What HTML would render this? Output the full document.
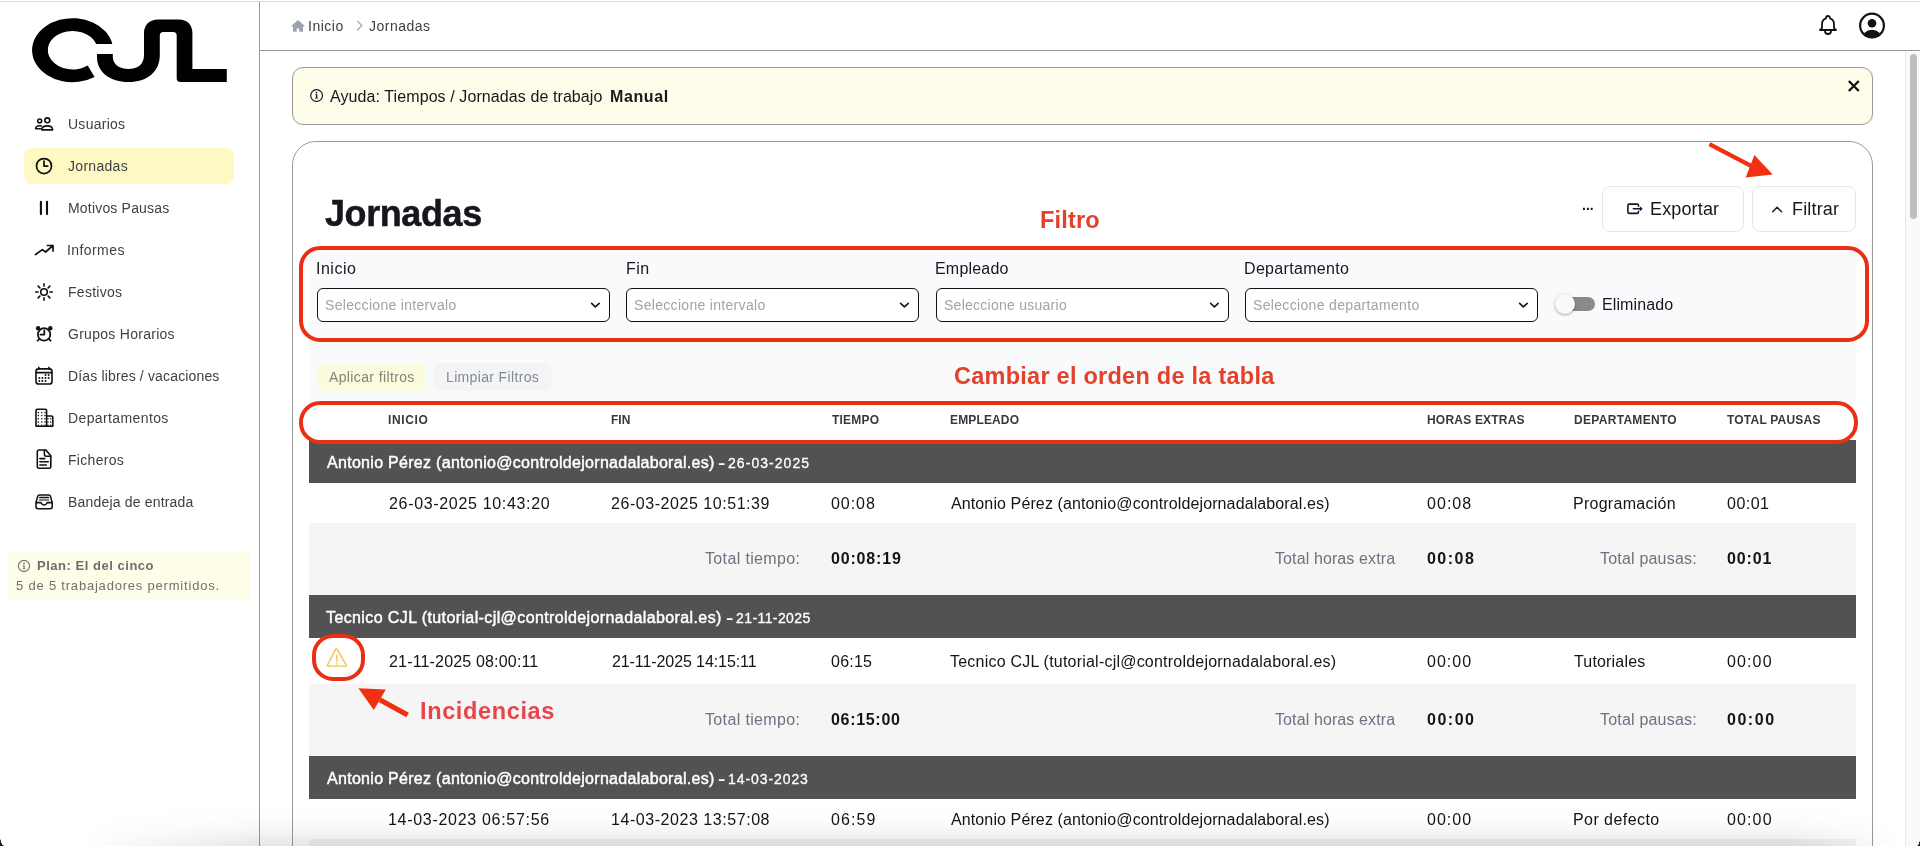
<!DOCTYPE html>
<html lang="es"><head><meta charset="utf-8"><title>Jornadas</title><style>
html,body{margin:0;padding:0}
body{width:1920px;height:846px;overflow:hidden;position:relative;background:#fff;font-family:"Liberation Sans",sans-serif;}
.a{position:absolute;box-sizing:border-box}
.t{position:absolute;white-space:nowrap;will-change:transform;}
svg{position:absolute;overflow:visible}
</style></head><body>
<div class="a" style="left:0px;top:1px;width:1920px;height:1px;background:#dddddd;"></div>
<div class="a" style="left:259px;top:2px;width:1px;height:844px;background:#9a9a9a;"></div>
<div class="a" style="left:260px;top:50px;width:1660px;height:1px;background:#9a9a9a;"></div>
<div class="a" style="left:1905px;top:51px;width:15px;height:795px;background:#fafafa;border-left:1px solid #e8e8e8;"></div>
<div class="a" style="left:1909.5px;top:54px;width:7.5px;height:165px;background:#bebebe;border-radius:4px;"></div>
<svg style="left:0;top:0" width="260" height="100" viewBox="0 0 260 100" role="img" aria-label="CJL"><title>CJL</title><g fill="#000">
<path d="M112.3 43.9 A40.5 32 0 1 0 94.6 77 L87.7 65.5 A24.9 19.2 0 1 1 96.2 43.9 Z"/>
<path d="M97 54 H112.8 V57 C112.8 64 119 69 128.4 69 C138 69 144 64 144 55 V33 C144 24.5 150 19.4 158 19.4 H179 C187 19.4 192.4 24.5 192.4 33 V69 H226.8 V82 H180.5 C178 82 176.7 80.5 176.7 78.5 V35.5 C176.7 33.2 175.5 32 173.2 32 H163.3 C161 32 159.8 33.2 159.8 35.5 V55 C159.8 72 147 82 128.5 82 C110 82 97 72 97 57 Z"/>
</g></svg>
<div class="a" style="left:24px;top:148px;width:210px;height:36px;background:#fef9c3;border-radius:8px;"></div>
<span class="t" style="left:67.62px;top:114.15px;font-size:14px;color:#3f3f46;line-height:20px;letter-spacing:0.263px;">Usuarios</span>
<span class="t" style="left:67.99px;top:156.15px;font-size:14px;color:#3f3f46;line-height:20px;letter-spacing:0.303px;">Jornadas</span>
<span class="t" style="left:67.55px;top:198.15px;font-size:14px;color:#3f3f46;line-height:20px;letter-spacing:0.187px;">Motivos Pausas</span>
<span class="t" style="left:67.41px;top:240.15px;font-size:14px;color:#3f3f46;line-height:20px;letter-spacing:0.419px;">Informes</span>
<span class="t" style="left:67.55px;top:282.15px;font-size:14px;color:#3f3f46;line-height:20px;letter-spacing:0.275px;">Festivos</span>
<span class="t" style="left:67.50px;top:324.15px;font-size:14px;color:#3f3f46;line-height:20px;letter-spacing:0.279px;">Grupos Horarios</span>
<span class="t" style="left:67.55px;top:366.15px;font-size:14px;color:#3f3f46;line-height:20px;letter-spacing:0.153px;">Días libres / vacaciones</span>
<span class="t" style="left:67.55px;top:408.15px;font-size:14px;color:#3f3f46;line-height:20px;letter-spacing:0.386px;">Departamentos</span>
<span class="t" style="left:67.55px;top:450.15px;font-size:14px;color:#3f3f46;line-height:20px;letter-spacing:0.296px;">Ficheros</span>
<span class="t" style="left:67.55px;top:492.15px;font-size:14px;color:#3f3f46;line-height:20px;letter-spacing:0.184px;">Bandeja de entrada</span>
<div class="a" style="left:8px;top:552px;width:242px;height:48px;background:#fefde7;"></div>
<span class="t" style="left:36.54px;top:556.39px;font-size:13px;color:#6c6d72;line-height:20px;letter-spacing:0.525px;font-weight:700;">Plan: El del cinco</span>
<span class="t" style="left:15.98px;top:576.29px;font-size:13px;color:#707176;line-height:20px;letter-spacing:0.796px;">5 de 5 trabajadores permitidos.</span>
<span class="t" style="left:307.71px;top:15.95px;font-size:14px;color:#3b3f46;line-height:20px;letter-spacing:0.496px;">Inicio</span>
<span class="t" style="left:369.49px;top:15.95px;font-size:14px;color:#3b3f46;line-height:20px;letter-spacing:0.489px;">Jornadas</span>
<div class="a" style="left:292px;top:67px;width:1581px;height:58px;background:#fefdea;border:1px solid #9a9a9a;border-radius:11px;"></div>
<span class="t" style="left:329.87px;top:86.85px;font-size:16px;color:#15171c;line-height:20px;letter-spacing:0.091px;">Ayuda: Tiempos / Jornadas de trabajo</span>
<span class="t" style="left:609.74px;top:86.85px;font-size:16px;color:#15171c;line-height:20px;letter-spacing:0.611px;font-weight:700;">Manual</span>
<div class="a" style="left:292px;top:141px;width:1581px;height:759px;background:#fff;border:1px solid #9a9a9a;border-radius:24px;"></div>
<span class="t" style="left:325.26px;top:203.52px;font-size:36px;color:#15171c;line-height:20px;letter-spacing:-0.412px;font-weight:700;-webkit-text-stroke:0.5px #15171c;">Jornadas</span>
<span class="t" style="left:1581.66px;top:195.05px;font-size:14px;color:#15171c;line-height:20px;font-weight:700;">...</span>
<div class="a" style="left:1602px;top:186px;width:142px;height:45.5px;background:#fff;border:1px solid #e5e7eb;border-radius:8px;"></div>
<div class="a" style="left:1752px;top:186px;width:104px;height:45.5px;background:#fff;border:1px solid #e5e7eb;border-radius:8px;"></div>
<span class="t" style="left:1649.92px;top:198.96px;font-size:18px;color:#15171c;line-height:20px;letter-spacing:0.148px;">Exportar</span>
<span class="t" style="left:1792.32px;top:198.96px;font-size:18px;color:#15171c;line-height:20px;letter-spacing:0.162px;">Filtrar</span>
<div class="a" style="left:309px;top:251px;width:1547px;height:152px;background:#f9fafb;"></div>
<span class="t" style="left:315.93px;top:259.05px;font-size:16px;color:#15171c;line-height:20px;letter-spacing:0.496px;">Inicio</span>
<span class="t" style="left:625.89px;top:259.05px;font-size:16px;color:#15171c;line-height:20px;letter-spacing:0.406px;">Fin</span>
<span class="t" style="left:934.99px;top:259.05px;font-size:16px;color:#15171c;line-height:20px;letter-spacing:0.189px;">Empleado</span>
<span class="t" style="left:1244.39px;top:259.05px;font-size:16px;color:#15171c;line-height:20px;letter-spacing:0.325px;">Departamento</span>
<div class="a" style="left:317px;top:288px;width:293px;height:34px;background:#fff;border:1px solid #111;border-radius:6px;"></div>
<span class="t" style="left:325.37px;top:295.05px;font-size:14px;color:#9ea3ab;line-height:20px;letter-spacing:0.311px;">Seleccione intervalo</span>
<div class="a" style="left:626px;top:288px;width:293px;height:34px;background:#fff;border:1px solid #111;border-radius:6px;"></div>
<span class="t" style="left:634.37px;top:295.05px;font-size:14px;color:#9ea3ab;line-height:20px;letter-spacing:0.311px;">Seleccione intervalo</span>
<div class="a" style="left:936px;top:288px;width:293px;height:34px;background:#fff;border:1px solid #111;border-radius:6px;"></div>
<span class="t" style="left:944.37px;top:295.05px;font-size:14px;color:#9ea3ab;line-height:20px;letter-spacing:0.259px;">Seleccione usuario</span>
<div class="a" style="left:1245px;top:288px;width:293px;height:34px;background:#fff;border:1px solid #111;border-radius:6px;"></div>
<span class="t" style="left:1253.37px;top:295.05px;font-size:14px;color:#9ea3ab;line-height:20px;letter-spacing:0.338px;">Seleccione departamento</span>
<span class="t" style="left:1601.89px;top:295.45px;font-size:16px;color:#15171c;line-height:20px;letter-spacing:0.102px;">Eliminado</span>
<div class="a" style="left:1564px;top:297px;width:31px;height:14px;background:#8a8a8a;border-radius:7px;"></div>
<div class="a" style="left:1555px;top:294px;width:20px;height:20px;background:#fafafa;border-radius:10px;box-shadow:0 1px 3px rgba(0,0,0,.35);"></div>
<div class="a" style="left:317px;top:363px;width:109px;height:28px;background:#fbfbdd;border-radius:6px;"></div>
<div class="a" style="left:434px;top:363px;width:118px;height:28px;background:#f3f4f6;border-radius:6px;"></div>
<span class="t" style="left:329.47px;top:366.65px;font-size:14px;color:#84857a;line-height:20px;letter-spacing:0.372px;">Aplicar filtros</span>
<span class="t" style="left:446.35px;top:366.65px;font-size:14px;color:#858990;line-height:20px;letter-spacing:0.353px;">Limpiar Filtros</span>
<div class="a" style="left:309px;top:403px;width:1547px;height:38px;background:#fff;"></div>
<span class="t" style="left:388.21px;top:410.04px;font-size:12px;color:#36383f;line-height:20px;letter-spacing:0.625px;font-weight:700;">INICIO</span>
<span class="t" style="left:610.91px;top:410.04px;font-size:12px;color:#36383f;line-height:20px;font-weight:700;">FIN</span>
<span class="t" style="left:832.07px;top:410.04px;font-size:12px;color:#36383f;line-height:20px;letter-spacing:0.226px;font-weight:700;">TIEMPO</span>
<span class="t" style="left:949.51px;top:410.04px;font-size:12px;color:#36383f;line-height:20px;letter-spacing:0.141px;font-weight:700;">EMPLEADO</span>
<span class="t" style="left:1426.91px;top:410.04px;font-size:12px;color:#36383f;line-height:20px;letter-spacing:0.201px;font-weight:700;">HORAS EXTRAS</span>
<span class="t" style="left:1573.71px;top:410.04px;font-size:12px;color:#36383f;line-height:20px;letter-spacing:0.305px;font-weight:700;">DEPARTAMENTO</span>
<span class="t" style="left:1726.87px;top:410.04px;font-size:12px;color:#36383f;line-height:20px;letter-spacing:0.207px;font-weight:700;">TOTAL PAUSAS</span>
<div class="a" style="left:309px;top:440px;width:1547px;height:43px;background:#525252;"></div>
<span class="t" style="left:326.57px;top:453.05px;font-size:16px;color:#fff;line-height:20px;letter-spacing:0.294px;-webkit-text-stroke:0.45px #fff;">Antonio Pérez (antonio@controldejornadalaboral.es)</span>
<span class="t" style="left:717.63px;top:452.87px;font-size:22px;color:#fff;line-height:20px;-webkit-text-stroke:0.2px #fff;">-</span>
<span class="t" style="left:728.30px;top:453.15px;font-size:14px;color:#fff;line-height:20px;letter-spacing:1.051px;-webkit-text-stroke:0.3px #fff;">26-03-2025</span>
<div class="a" style="left:309px;top:483px;width:1547px;height:40px;background:#fff;"></div>
<span class="t" style="left:388.90px;top:493.75px;font-size:16px;color:#141414;line-height:20px;letter-spacing:0.674px;">26-03-2025 10:43:20</span>
<span class="t" style="left:611.10px;top:493.75px;font-size:16px;color:#141414;line-height:20px;letter-spacing:0.549px;">26-03-2025 10:51:39</span>
<span class="t" style="left:831.28px;top:493.75px;font-size:16px;color:#141414;line-height:20px;letter-spacing:0.944px;">00:08</span>
<span class="t" style="left:950.57px;top:493.75px;font-size:16px;color:#141414;line-height:20px;letter-spacing:0.114px;">Antonio Pérez (antonio@controldejornadalaboral.es)</span>
<span class="t" style="left:1427.48px;top:493.75px;font-size:16px;color:#141414;line-height:20px;letter-spacing:1.044px;">00:08</span>
<span class="t" style="left:1573.39px;top:493.75px;font-size:16px;color:#141414;line-height:20px;letter-spacing:0.267px;">Programación</span>
<span class="t" style="left:1726.58px;top:493.75px;font-size:16px;color:#141414;line-height:20px;letter-spacing:0.489px;">00:01</span>
<div class="a" style="left:309px;top:523px;width:1547px;height:72px;background:#f5f5f5;"></div>
<span class="t" style="left:705.45px;top:548.95px;font-size:16px;color:#6b7280;line-height:20px;letter-spacing:0.358px;">Total tiempo:</span>
<span class="t" style="left:831.28px;top:548.95px;font-size:16px;color:#141414;line-height:20px;letter-spacing:0.822px;font-weight:700;">00:08:19</span>
<span class="t" style="left:1275.25px;top:548.95px;font-size:16px;color:#6b7280;line-height:20px;letter-spacing:0.110px;">Total horas extra</span>
<span class="t" style="left:1427.48px;top:548.95px;font-size:16px;color:#141414;line-height:20px;letter-spacing:1.471px;font-weight:700;">00:08</span>
<span class="t" style="left:1599.55px;top:548.95px;font-size:16px;color:#6b7280;line-height:20px;letter-spacing:0.194px;">Total pausas:</span>
<span class="t" style="left:1726.58px;top:548.95px;font-size:16px;color:#141414;line-height:20px;letter-spacing:0.859px;font-weight:700;">00:01</span>
<div class="a" style="left:309px;top:595px;width:1547px;height:43px;background:#525252;"></div>
<span class="t" style="left:326.25px;top:608.15px;font-size:16px;color:#fff;line-height:20px;letter-spacing:0.393px;-webkit-text-stroke:0.45px #fff;">Tecnico CJL (tutorial-cjl@controldejornadalaboral.es)</span>
<span class="t" style="left:725.63px;top:607.97px;font-size:22px;color:#fff;line-height:20px;-webkit-text-stroke:0.2px #fff;">-</span>
<span class="t" style="left:736.30px;top:608.25px;font-size:14px;color:#fff;line-height:20px;letter-spacing:0.411px;-webkit-text-stroke:0.3px #fff;">21-11-2025</span>
<div class="a" style="left:309px;top:638px;width:1547px;height:46px;background:#fff;"></div>
<span class="t" style="left:389.20px;top:651.85px;font-size:16px;color:#141414;line-height:20px;letter-spacing:0.171px;">21-11-2025 08:00:11</span>
<span class="t" style="left:611.50px;top:651.85px;font-size:16px;color:#141414;line-height:20px;letter-spacing:-0.090px;">21-11-2025 14:15:11</span>
<span class="t" style="left:831.38px;top:651.85px;font-size:16px;color:#141414;line-height:20px;letter-spacing:0.236px;">06:15</span>
<span class="t" style="left:950.35px;top:651.85px;font-size:16px;color:#141414;line-height:20px;letter-spacing:0.216px;">Tecnico CJL (tutorial-cjl@controldejornadalaboral.es)</span>
<span class="t" style="left:1427.48px;top:651.85px;font-size:16px;color:#141414;line-height:20px;letter-spacing:1.024px;">00:00</span>
<span class="t" style="left:1574.35px;top:651.85px;font-size:16px;color:#141414;line-height:20px;letter-spacing:0.175px;">Tutoriales</span>
<span class="t" style="left:1726.58px;top:651.85px;font-size:16px;color:#141414;line-height:20px;letter-spacing:1.124px;">00:00</span>
<div class="a" style="left:309px;top:684px;width:1547px;height:72px;background:#f5f5f5;"></div>
<span class="t" style="left:705.45px;top:710.45px;font-size:16px;color:#6b7280;line-height:20px;letter-spacing:0.358px;">Total tiempo:</span>
<span class="t" style="left:831.28px;top:710.45px;font-size:16px;color:#141414;line-height:20px;letter-spacing:0.689px;font-weight:700;">06:15:00</span>
<span class="t" style="left:1275.25px;top:710.45px;font-size:16px;color:#6b7280;line-height:20px;letter-spacing:0.110px;">Total horas extra</span>
<span class="t" style="left:1427.48px;top:710.45px;font-size:16px;color:#141414;line-height:20px;letter-spacing:1.511px;font-weight:700;">00:00</span>
<span class="t" style="left:1599.55px;top:710.45px;font-size:16px;color:#6b7280;line-height:20px;letter-spacing:0.194px;">Total pausas:</span>
<span class="t" style="left:1726.58px;top:710.45px;font-size:16px;color:#141414;line-height:20px;letter-spacing:1.536px;font-weight:700;">00:00</span>
<div class="a" style="left:309px;top:756px;width:1547px;height:43px;background:#525252;"></div>
<span class="t" style="left:326.57px;top:768.85px;font-size:16px;color:#fff;line-height:20px;letter-spacing:0.294px;-webkit-text-stroke:0.45px #fff;">Antonio Pérez (antonio@controldejornadalaboral.es)</span>
<span class="t" style="left:717.83px;top:768.67px;font-size:22px;color:#fff;line-height:20px;-webkit-text-stroke:0.2px #fff;">-</span>
<span class="t" style="left:728.14px;top:768.95px;font-size:14px;color:#fff;line-height:20px;letter-spacing:0.917px;-webkit-text-stroke:0.3px #fff;">14-03-2023</span>
<div class="a" style="left:309px;top:799px;width:1547px;height:40px;background:#fff;"></div>
<span class="t" style="left:388.48px;top:810.05px;font-size:16px;color:#141414;line-height:20px;letter-spacing:0.702px;">14-03-2023 06:57:56</span>
<span class="t" style="left:610.58px;top:810.05px;font-size:16px;color:#141414;line-height:20px;letter-spacing:0.552px;">14-03-2023 13:57:08</span>
<span class="t" style="left:831.38px;top:810.05px;font-size:16px;color:#141414;line-height:20px;letter-spacing:1.085px;">06:59</span>
<span class="t" style="left:950.57px;top:810.05px;font-size:16px;color:#141414;line-height:20px;letter-spacing:0.114px;">Antonio Pérez (antonio@controldejornadalaboral.es)</span>
<span class="t" style="left:1427.48px;top:810.05px;font-size:16px;color:#141414;line-height:20px;letter-spacing:1.024px;">00:00</span>
<span class="t" style="left:1573.39px;top:810.05px;font-size:16px;color:#141414;line-height:20px;letter-spacing:0.444px;">Por defecto</span>
<span class="t" style="left:1726.58px;top:810.05px;font-size:16px;color:#141414;line-height:20px;letter-spacing:1.124px;">00:00</span>
<div class="a" style="left:309px;top:839px;width:1547px;height:7px;background:#f5f5f5;"></div>
<svg style="left:32px;top:112px" width="24" height="24" viewBox="0 0 24 24" ><g fill="none" stroke="#111" stroke-width="1.6" stroke-linejoin="round" stroke-linecap="round"><circle cx="7.7" cy="8.9" r="1.95"/><circle cx="15.3" cy="8.3" r="2.45"/><path d="M9.8 17.900C9.8 15.200 12.300 13.900 15.300 13.900S20.600 15.200 20.600 17.900Z"/><path d="M9.400 13.900C8.900 13.750 8.300 13.700 7.700 13.700 5.200 13.700 3.700 14.900 3.700 16.800H8.700"/></g></svg>
<svg style="left:34px;top:156px" width="20" height="20" viewBox="0 0 24 24" ><path fill="none" stroke="#111" stroke-width="2.1" stroke-linecap="round" stroke-linejoin="round" d="M12 6v6h4.5m4.5 0a9 9 0 1 1-18 0 9 9 0 0 1 18 0Z"/></svg>
<svg style="left:34px;top:198px" width="20" height="20" viewBox="0 0 20 20" ><path fill="none" stroke="#111" stroke-width="2.1" stroke-linecap="round" d="M6.9 3.7v12.4M13 3.7v12.4"/></svg>
<svg style="left:32px;top:238px" width="24" height="24" viewBox="0 0 24 24" ><path fill="none" stroke="#111" stroke-width="1.7" stroke-linecap="round" stroke-linejoin="round" d="M15.4 7.5H21v5.6M21 7.5 13.6 14l-3.2-2.4L3.5 16.5"/></svg>
<svg style="left:32px;top:280px" width="24" height="24" viewBox="0 0 24 24" ><g fill="none" stroke="#111" stroke-width="1.6" stroke-linecap="round"><circle cx="12" cy="12" r="3.3"/><path d="M17.90 12.00L20.30 12.00M16.17 16.17L17.87 17.87M12.00 17.90L12.00 20.30M7.83 16.17L6.13 17.87M6.10 12.00L3.70 12.00M7.83 7.83L6.13 6.13M12.00 6.10L12.00 3.70M16.17 7.83L17.87 6.13"/></g></svg>
<svg style="left:32px;top:322px" width="24" height="24" viewBox="0 0 24 24" ><g fill="none" stroke="#111" stroke-width="1.8" stroke-linecap="round" stroke-linejoin="round"><circle cx="12.1" cy="12.4" r="6.2"/><path d="M12.3 8.3v4.3H8.4"/><path d="M7.2 17.1 5.6 18.7M17 17.1l1.6 1.6"/></g><circle cx="6.1" cy="6.3" r="2.2" fill="#111"/><circle cx="18.3" cy="6.3" r="2.2" fill="#111"/></svg>
<svg style="left:32px;top:364px" width="24" height="24" viewBox="0 0 24 24" ><g fill="none" stroke="#111" stroke-width="1.6" stroke-linecap="round" stroke-linejoin="round"><rect x="4" y="4.9" width="16" height="15.1" rx="2.6"/><path d="M4 8.6h16"/><path d="M6.8 3.4v1.5M17 3.4v1.5"/></g><g fill="#111"><circle cx="13.5" cy="11" r="1"/><circle cx="16.6" cy="11" r="1"/><circle cx="7.3" cy="14" r="1"/><circle cx="10.4" cy="14" r="1"/><circle cx="13.5" cy="14" r="1"/><circle cx="16.6" cy="14" r="1"/><circle cx="7.3" cy="17" r="1"/><circle cx="10.4" cy="17" r="1"/><circle cx="13.5" cy="17" r="1"/></g></svg>
<svg style="left:32px;top:406px" width="24" height="24" viewBox="0 0 24 24" ><g fill="none" stroke="#111" stroke-width="1.6" stroke-linejoin="round"><path d="M4 20.2V4.6a1.3 1.3 0 0 1 1.3-1.3h8a1.3 1.3 0 0 1 1.3 1.3v15.6z"/><path d="M14.6 10h4.9a1.3 1.3 0 0 1 1.3 1.3v8.9h-6.2"/></g><g fill="#111"><rect x="5.7" y="5.9" width="1.3" height="1.3"/><rect x="5.7" y="8.9" width="1.3" height="1.3"/><rect x="5.7" y="12.1" width="1.3" height="1.3"/><rect x="5.7" y="15.4" width="1.3" height="1.3"/><rect x="5.7" y="18.6" width="1.3" height="1.3"/><rect x="9.1" y="5.9" width="1.3" height="1.3"/><rect x="9.1" y="8.9" width="1.3" height="1.3"/><rect x="9.1" y="12.1" width="1.3" height="1.3"/><rect x="9.1" y="15.4" width="1.3" height="1.3"/><rect x="9.1" y="18.6" width="1.3" height="1.3"/><rect x="12.3" y="5.9" width="1.3" height="1.3"/><rect x="12.3" y="8.9" width="1.3" height="1.3"/><rect x="12.3" y="12.1" width="1.3" height="1.3"/><rect x="12.3" y="15.4" width="1.3" height="1.3"/><rect x="12.3" y="18.6" width="1.3" height="1.3"/><rect x="15.3" y="12.1" width="1.3" height="1.3"/><rect x="15.3" y="15.4" width="1.3" height="1.3"/><rect x="15.3" y="18.6" width="1.3" height="1.3"/><rect x="18.0" y="12.1" width="1.3" height="1.3"/><rect x="18.0" y="15.4" width="1.3" height="1.3"/><rect x="18.0" y="18.6" width="1.3" height="1.3"/></g></svg>
<svg style="left:32px;top:448px" width="24" height="24" viewBox="0 0 24 24" ><g fill="none" stroke="#111" stroke-width="1.6" stroke-linecap="round" stroke-linejoin="round"><path d="M5.3 3.6v15.1a1.6 1.6 0 0 0 1.6 1.6h10.3a1.6 1.6 0 0 0 1.6-1.6V7.8L13.9 2H6.9a1.6 1.6 0 0 0-1.6 1.6Z"/><path d="M12.4 2.3v4.4a1.6 1.6 0 0 0 1.6 1.6h4.7"/><path d="M7.9 10.6h4.9M7.9 13.8h8.4M7.9 17h6.4"/></g></svg>
<svg style="left:32px;top:490px" width="24" height="24" viewBox="0 0 24 24" ><g fill="none" stroke="#111" stroke-width="1.55" stroke-linecap="round" stroke-linejoin="round"><path d="M4 12.6v4.2A1.9 1.9 0 0 0 5.9 18.7h12.4a1.9 1.9 0 0 0 1.9-1.9v-4.2L18.5 6.4A1.9 1.9 0 0 0 16.7 5H7.5a1.9 1.9 0 0 0-1.8 1.4Z"/><path d="M4 12.6h4.3c.7 0 1 .3 1.3.9.5 1 1.300 1.500 2.500 1.500s2-.5 2.500-1.500c.3-.6.6-.9 1.300-.9h4.300"/><path d="M7.800 7.500h8.600"/><path d="M7.600 10h9" stroke-opacity=".7"/></g></svg>
<svg style="left:17px;top:559px" width="14" height="14" viewBox="0 0 14 14" ><g fill="none" stroke="#6c6d72" stroke-width="1.1"><circle cx="7" cy="7" r="5.6"/></g><g fill="#6c6d72"><circle cx="7" cy="4.3" r=".85"/><path d="M5.900 5.900h1.700v3.500h.8v.8H5.700v-.8h.8V6.700h-.6z"/></g></svg>
<svg style="left:291px;top:19px" width="14" height="14" viewBox="0 0 14 14" ><path fill="#9ca3af" d="M7 .9 .7 6.600 a.5.5 0 0 0 .35.850H2v4.600a.7.7 0 0 0 .7.700H5.700V9.500h2.600v3.250H11.300a.7.7 0 0 0 .7-.700V7.450h.95a.5.5 0 0 0 .35-.850Z"/></svg>
<svg style="left:354px;top:18px" width="12" height="16" viewBox="0 0 12 16" ><path fill="none" stroke="#9ca3af" stroke-width="1.3" stroke-linecap="round" stroke-linejoin="round" d="M3.700 3.400 7.900 7.600 3.700 11.800"/></svg>
<svg style="left:1816px;top:13.3px" width="24" height="24" viewBox="0 0 24 24" ><path fill="none" stroke="#111" stroke-width="1.8" stroke-linecap="round" stroke-linejoin="round" d="M15 17h5l-1.405-1.405A2.032 2.032 0 0 1 18 14.158V11a6.002 6.002 0 0 0-4-5.659V5a2 2 0 1 0-4 0v.341C7.670 6.165 6 8.388 6 11v3.159c0 .538-.214 1.055-.595 1.436L4 17h5m6 0v1a3 3 0 1 1-6 0v-1m6 0H9"/></svg>
<svg style="left:1858px;top:11px" width="28" height="28" viewBox="0 0 28 28" ><defs><clipPath id="uc"><circle cx="14" cy="14.600" r="12"/></clipPath></defs><circle cx="14" cy="14.600" r="11.900" fill="none" stroke="#111" stroke-width="2.200"/><circle cx="14" cy="12.200" r="4.300" fill="#111"/><ellipse cx="14" cy="29" rx="10.500" ry="10.300" fill="#111" clip-path="url(#uc)"/></svg>
<svg style="left:309px;top:88px" width="15" height="15" viewBox="0 0 15 15" ><g fill="none" stroke="#111827" stroke-width="1.200"><circle cx="7.600" cy="7.500" r="5.900"/></g><g fill="#111827"><circle cx="7.500" cy="4.600" r=".9"/><path d="M6.300 6.200h2v3.600h.9v.8H6v-.8h.9V7h-.6z"/></g></svg>
<svg style="left:1846px;top:78px" width="16" height="16" viewBox="0 0 16 16" ><path fill="none" stroke="#111" stroke-width="2.300" stroke-linecap="butt" d="M2.800 3 12.800 13M12.800 3 2.800 13"/></svg>
<svg style="left:1625px;top:201px" width="20" height="16" viewBox="0 0 20 16" ><g fill="none" stroke="#111827" stroke-linecap="round" stroke-linejoin="round"><path stroke-width="1.600" d="M13.500 5.200V4.500a1.400 1.400 0 0 0-1.400-1.400H4.300a1.400 1.400 0 0 0-1.400 1.400v6.500a1.400 1.400 0 0 0 1.400 1.400h7.800a1.400 1.400 0 0 0 1.400-1.400v-.7"/><path stroke-width="1.400" d="M8.300 7.700h8.200M15.400 6.400l1.300 1.300-1.300 1.300"/></g></svg>
<svg style="left:1769px;top:202px" width="16" height="14" viewBox="0 0 16 14" ><path fill="none" stroke="#111827" stroke-width="1.400" stroke-linecap="round" stroke-linejoin="round" d="M3.700 9.800 8.100 5.300 12.600 9.800"/></svg>
<svg style="left:588px;top:298.6px" width="14" height="12" viewBox="0 0 14 12" ><path fill="none" stroke="#111827" stroke-width="1.600" stroke-linecap="round" stroke-linejoin="round" d="M3.600 4.300 7.400 7.900 11.200 4.300"/></svg>
<svg style="left:897px;top:298.6px" width="14" height="12" viewBox="0 0 14 12" ><path fill="none" stroke="#111827" stroke-width="1.600" stroke-linecap="round" stroke-linejoin="round" d="M3.600 4.300 7.400 7.900 11.200 4.300"/></svg>
<svg style="left:1207px;top:298.6px" width="14" height="12" viewBox="0 0 14 12" ><path fill="none" stroke="#111827" stroke-width="1.600" stroke-linecap="round" stroke-linejoin="round" d="M3.600 4.300 7.400 7.900 11.200 4.300"/></svg>
<svg style="left:1516px;top:298.6px" width="14" height="12" viewBox="0 0 14 12" ><path fill="none" stroke="#111827" stroke-width="1.600" stroke-linecap="round" stroke-linejoin="round" d="M3.600 4.300 7.400 7.900 11.200 4.300"/></svg>
<svg style="left:325px;top:646px" width="24" height="24" viewBox="0 0 24 24" ><g fill="none" stroke="#efc345" stroke-width="1.400" stroke-linecap="round" stroke-linejoin="round"><path d="M11.800 3.400a.9.9 0 0 0-1.600 0L2.300 18.700a.9.9 0 0 0 .8 1.400h16.800a.9.9 0 0 0 .8-1.400Z" transform="translate(0.300 0)"/><path d="M11.800 9.200v6.300"/></g><circle cx="11.800" cy="17.900" r=".8" fill="#efc345"/></svg>
<div class="a" style="left:299px;top:245.8px;width:1570px;height:96.39999999999998px;border:4.8px solid #ea2f14;border-radius:21px;"></div>
<div class="a" style="left:299px;top:401px;width:1559px;height:42.80000000000001px;border:4.8px solid #ea2f14;border-radius:21px;"></div>
<span class="t" style="left:1040.15px;top:209.75px;font-size:23.5px;color:#e4402a;line-height:20px;letter-spacing:0.165px;font-weight:700;">Filtro</span>
<span class="t" style="left:953.94px;top:365.95px;font-size:23.5px;color:#e4402a;line-height:20px;letter-spacing:0.255px;font-weight:700;">Cambiar el orden de la tabla</span>
<span class="t" style="left:419.85px;top:700.85px;font-size:23.5px;color:#e8444a;line-height:20px;letter-spacing:0.640px;font-weight:700;">Incidencias</span>
<div class="a" style="left:312px;top:634px;width:53px;height:47.299999999999955px;border:4.9px solid #ea2f14;border-radius:21px;"></div>
<svg style="left:0;top:0" width="1920" height="846"><g fill="#f0300f" stroke="none"><path d="M1709.400 144.100 1751.500 166.100" stroke="#f0300f" stroke-width="4.200" fill="none"/><path d="M1772.700 174.500 1754.400 155.100 1745.700 177.600Z"/><path d="M407.600 715 379.800 699.700" stroke="#f0300f" stroke-width="5" fill="none"/><path d="M358.400 688.300 385.800 689.400 373.800 710.100Z"/></g></svg>
<div class="a" style="left:0px;top:808px;width:1920px;height:38px;background:linear-gradient(to bottom,rgba(0,0,0,0) 0%,rgba(0,0,0,.012) 35%,rgba(0,0,0,.045) 65%,rgba(0,0,0,.1) 100%);-webkit-mask-image:linear-gradient(to right,transparent 80px,#000 260px,#000 1790px,transparent 1900px);mask-image:linear-gradient(to right,transparent 80px,#000 260px,#000 1790px,transparent 1900px);"></div>
<div class="a" style="left:0px;top:836px;width:4px;height:10px;background:radial-gradient(ellipse 4px 10px at 100% 0,transparent 92%,#2a1c14 100%);"></div>
<div class="a" style="left:1917px;top:838px;width:3px;height:8px;background:radial-gradient(ellipse 3px 8px at 0 0,transparent 92%,#2a1c14 100%);"></div>
</body></html>
